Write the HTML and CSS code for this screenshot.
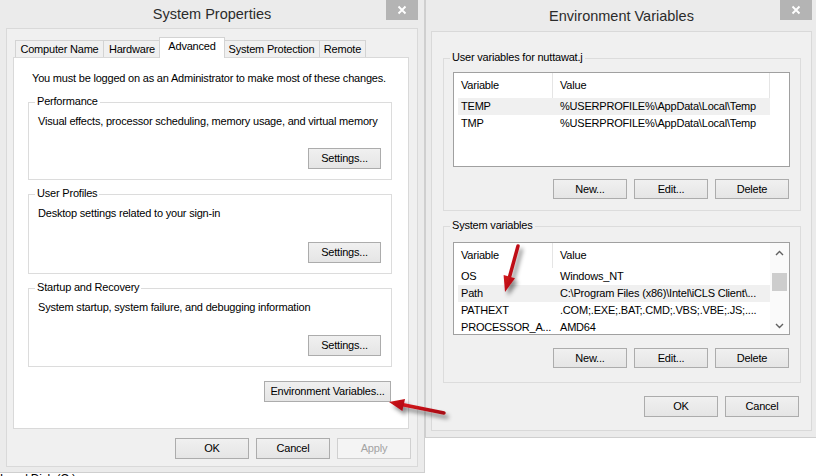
FILE: index.html
```html
<!DOCTYPE html>
<html lang="en">
<head>
<meta charset="utf-8">
<title>System Properties - Environment Variables</title>
<link rel="stylesheet" href="styles.css">
</head>
<body>
<div class="desktop">
  <div class="desk-item">Local Disk (C:)</div>

  <section class="win win-sys">
    <header class="titlebar">
      <span class="title">System Properties</span>
      <span class="close"><svg viewBox="0 0 10 10" width="10" height="10"><path d="M1.5 1.5L8.5 8.5M8.5 1.5L1.5 8.5"/></svg></span>
    </header>
    <div class="client">
      <nav class="tabs">
        <span class="tab tab-cn">Computer Name</span>
        <span class="tab tab-hw">Hardware</span>
        <span class="tab tab-adv sel">Advanced</span>
        <span class="tab tab-sp">System Protection</span>
        <span class="tab tab-rm">Remote</span>
      </nav>
      <div class="panel">
        <p class="note">You must be logged on as an Administrator to make most of these changes.</p>
        <div class="group sgroup g1">
          <span class="legend">Performance</span>
          <p class="desc">Visual effects, processor scheduling, memory usage, and virtual memory</p>
          <button class="btn btn-set">Settings...</button>
        </div>
        <div class="group sgroup g2">
          <span class="legend">User Profiles</span>
          <p class="desc">Desktop settings related to your sign-in</p>
          <button class="btn btn-set">Settings...</button>
        </div>
        <div class="group sgroup g3">
          <span class="legend">Startup and Recovery</span>
          <p class="desc">System startup, system failure, and debugging information</p>
          <button class="btn btn-set">Settings...</button>
        </div>
        <button class="btn btn-env">Environment Variables...</button>
      </div>
      <div class="actions sys-actions">
        <button class="btn">OK</button>
        <button class="btn">Cancel</button>
        <button class="btn" disabled>Apply</button>
      </div>
    </div>
  </section>

  <section class="win win-env">
    <header class="titlebar">
      <span class="title">Environment Variables</span>
      <span class="close"><svg viewBox="0 0 10 10" width="10" height="10"><path d="M1.5 1.5L8.5 8.5M8.5 1.5L1.5 8.5"/></svg></span>
    </header>
    <div class="client">
      <div class="group egroup ug">
        <span class="legend">User variables for nuttawat.j</span>
        <div class="list list-user">
          <div class="lbody">
            <div class="lhead"><span class="h1">Variable</span><span class="h2">Value</span><span class="h3"></span></div>
            <div class="lrow hl"><span class="c1">TEMP</span><span class="c2">%USERPROFILE%\AppData\Local\Temp</span></div>
            <div class="lrow"><span class="c1">TMP</span><span class="c2">%USERPROFILE%\AppData\Local\Temp</span></div>
          </div>
        </div>
        <div class="btnrow">
          <button class="btn">New...</button>
          <button class="btn">Edit...</button>
          <button class="btn">Delete</button>
        </div>
      </div>
      <div class="group egroup sysg">
        <span class="legend">System variables</span>
        <div class="list list-sys">
          <div class="lbody">
            <div class="lhead"><span class="h1">Variable</span><span class="h2">Value</span></div>
            <div class="lrow"><span class="c1">OS</span><span class="c2">Windows_NT</span></div>
            <div class="lrow hl"><span class="c1">Path</span><span class="c2">C:\Program Files (x86)\Intel\iCLS Client\...</span></div>
            <div class="lrow"><span class="c1">PATHEXT</span><span class="c2">.COM;.EXE;.BAT;.CMD;.VBS;.VBE;.JS;....</span></div>
            <div class="lrow"><span class="c1">PROCESSOR_A...</span><span class="c2">AMD64</span></div>
          </div>
          <div class="vscroll">
            <span class="sarrow"><svg viewBox="0 0 9 6" width="9" height="6"><path d="M1 5L4.5 1.5L8 5"/></svg></span>
            <span class="thumb"></span>
            <span class="sarrow down"><svg viewBox="0 0 9 6" width="9" height="6"><path d="M1 1L4.5 4.5L8 1"/></svg></span>
          </div>
        </div>
        <div class="btnrow">
          <button class="btn">New...</button>
          <button class="btn">Edit...</button>
          <button class="btn">Delete</button>
        </div>
      </div>
      <div class="actions env-actions">
        <button class="btn">OK</button>
        <button class="btn">Cancel</button>
      </div>
    </div>
  </section>

  <svg class="arrows" width="816" height="476" viewBox="0 0 816 476">
    <defs>
      <filter id="shadow" x="-30%" y="-30%" width="160%" height="160%">
        <feDropShadow dx="3" dy="4" stdDeviation="2" flood-color="#000" flood-opacity="0.45"/>
      </filter>
      <linearGradient id="red" x1="0" y1="0" x2="1" y2="1">
        <stop offset="0" stop-color="#d4141c"/>
        <stop offset="1" stop-color="#a80d12"/>
      </linearGradient>
    </defs>
    <g filter="url(#shadow)" fill="url(#red)" stroke="url(#red)">
      <line x1="444" y1="413" x2="403" y2="404.7" stroke-width="3.5" stroke-linecap="round"/>
      <polygon points="389,402 405,399 402.4,411" stroke="none"/>
      <line x1="518" y1="246" x2="509.5" y2="277" stroke-width="3.5" stroke-linecap="round"/>
      <polygon points="505,292 503.6,275 515,278.3" stroke="none"/>
    </g>
  </svg>
</div>
</body>
</html>
```

FILE: styles.css
```css
* { box-sizing: border-box; }

html, body {
  margin: 0;
  padding: 0;
  background: #ffffff;
}

body {
  font-family: "Liberation Sans", Arial, sans-serif;
  font-size: 11px;
  letter-spacing: -0.2px;
  color: #000;
}

.desktop {
  position: relative;
  width: 816px;
  height: 476px;
  overflow: hidden;
  background: #ffffff;
}

.desk-item {
  position: absolute;
  left: 0;
  top: 472px;
  font-size: 12px;
  line-height: 14px;
  color: #000;
  z-index: 0;
}

/* ---------- windows ---------- */
.win {
  position: absolute;
  top: 0;
  background: #ebebeb;
  display: flex;
  flex-direction: column;
  z-index: 1;
}

.win-sys {
  left: 0;
  width: 425px;
  height: 473px;
  padding: 0 6px 5px 6px;
  border-right: 1px solid #cfcfcf;
  border-bottom: 1px solid #cfcfcf;
}

.win-env {
  left: 425px;
  width: 391px;
  height: 438px;
  padding: 0 4px 6px 5px;
  border-left: 1px solid #cfcfcf;
  border-bottom: 1px solid #cfcfcf;
}

.titlebar {
  position: relative;
  flex: none;
  display: flex;
  align-items: center;
  justify-content: center;
  height: 28px;
}

.win-env .titlebar { height: 31px; }

.title {
  font-size: 14.5px;
  letter-spacing: 0;
  color: #2b2b2b;
  line-height: 18px;
}

.close {
  position: absolute;
  top: 0;
  right: 0;
  width: 32px;
  height: 20px;
  background: #b4b4b4;
  display: flex;
  align-items: center;
  justify-content: center;
}

.close svg path {
  stroke: #ffffff;
  stroke-width: 1.9;
  fill: none;
}

.client {
  flex: 1;
  background: #f0f0f0;
  border: 1px solid #d9d9d9;
  display: flex;
  flex-direction: column;
}

/* ---------- tabs ---------- */
.win-sys .client {
  padding: 8px 8px 0 6px;
}

.tabs {
  display: flex;
  align-items: flex-end;
  height: 20px;
  padding-left: 2px;
}

.tab {
  height: 17px;
  border: 1px solid #d3d3d3;
  border-bottom: none;
  background: #f0f0f0;
  margin-right: -1px;
  text-align: center;
  line-height: 16px;
  white-space: nowrap;
}

.tab-cn { width: 89px; }
.tab-hw { width: 58px; }
.tab-sp { width: 97px; }
.tab-rm { width: 47px; }

.tab.sel {
  width: 66px;
  height: 21px;
  margin-left: -1px;
  margin-right: -2px;
  margin-bottom: -1px;
  background: #ffffff;
  position: relative;
  z-index: 2;
  line-height: 17px;
}

.panel {
  width: 396px;
  height: 372px;
  background: #ffffff;
  border: 1px solid #d9d9d9;
  padding: 13px 16px 0 14px;
  display: flex;
  flex-direction: column;
}

.note {
  margin: 0 0 16px 4px;
  line-height: 15px;
  white-space: nowrap;
}

/* ---------- group boxes ---------- */
.group {
  position: relative;
  border: 1px solid #dcdcdc;
  display: flex;
  flex-direction: column;
}

.legend {
  position: absolute;
  top: -9px;
  left: 6px;
  padding: 0 2px;
  line-height: 15px;
  white-space: nowrap;
}

.sgroup {
  padding: 11px 10px 10px 9px;
}
.sgroup .legend { background: #ffffff; }
.g1 { height: 78px; }
.g2 { height: 80px; margin-top: 14px; }
.g3 { height: 79px; margin-top: 14px; }

.desc {
  margin: 0;
  line-height: 15px;
  white-space: nowrap;
}

.btn {
  width: 74px;
  height: 21px;
  padding: 0;
  border: 1px solid #acacac;
  background: linear-gradient(#f0f0f0, #e5e5e5);
  font-family: inherit;
  font-size: 11px;
  letter-spacing: inherit;
  color: #000;
  line-height: 19px;
  white-space: nowrap;
}

.btn:disabled {
  color: #a3a3a3;
  border-color: #d0d0d0;
  background: #f4f4f4;
}

.btn-set {
  width: 73px;
  margin-top: auto;
  align-self: flex-end;
}

.btn-env {
  width: 127px;
  margin-top: 14px;
  align-self: flex-end;
  margin-right: 1px;
}

.actions {
  display: flex;
  justify-content: flex-end;
  gap: 7px;
}

.sys-actions {
  margin-top: 9px;
  margin-right: -2px;
}

/* ---------- env window ---------- */
.egroup {
  margin-left: 11px;
  margin-right: 10px;
}
.egroup .legend { background: #f0f0f0; }

.ug {
  margin-top: 26px;
  height: 153px;
  padding: 13px 10px 0 9px;
}

.sysg {
  margin-top: 15px;
  height: 157px;
  padding: 15px 10px 0 9px;
}

.list {
  display: flex;
  background: #ffffff;
  border: 1px solid #a0a0a0;
  overflow: hidden;
}

.list-user { height: 95px; }
.list-sys { height: 93px; }

.lbody {
  width: 316px;
  flex: none;
}

.list-user .lbody { width: 100%; }

.lhead {
  display: flex;
  height: 25px;
  align-items: stretch;
}

.lhead span {
  line-height: 24px;
  white-space: nowrap;
}

.h1 {
  width: 99px;
  padding-left: 7px;
  border-right: 1px solid #e5e5e5;
}

.h2 {
  width: 217px;
  padding-left: 7px;
}

.list-user .h2 { border-right: 1px solid #e5e5e5; }

.h3 { flex: 1; }

.lrow {
  display: flex;
  margin-left: 4px;
  width: 312px;
  height: 17px;
  line-height: 16px;
  white-space: nowrap;
}

.lrow.hl { background: #f0f0f0; }

.c1 {
  width: 95px;
  padding-left: 3px;
  overflow: hidden;
}

.c2 {
  width: 217px;
  padding-left: 7px;
  overflow: hidden;
}

.vscroll {
  width: 19px;
  flex: none;
  background: #fafafa;
  display: flex;
  flex-direction: column;
  align-items: center;
}

.sarrow {
  height: 19px;
  width: 100%;
  display: flex;
  align-items: center;
  justify-content: center;
}

.sarrow.down { margin-top: auto; height: 17px; }

.sarrow svg path {
  fill: none;
  stroke: #606060;
  stroke-width: 1.4;
}

.thumb {
  margin-top: 11px;
  width: 15px;
  height: 18px;
  background: #cdcdcd;
}

.btnrow {
  display: flex;
  justify-content: flex-end;
  gap: 7px;
  padding-right: 1px;
}

.ug .btnrow { margin-top: 12px; }
.sysg .btnrow { margin-top: 13px; }

.ug .btnrow .btn,
.sysg .btnrow .btn { height: 20px; line-height: 18px; }

.env-actions {
  margin-top: 13px;
  margin-right: 12px;
}

/* ---------- arrows overlay ---------- */
.arrows {
  position: absolute;
  left: 0;
  top: 0;
  z-index: 5;
  pointer-events: none;
}
```
